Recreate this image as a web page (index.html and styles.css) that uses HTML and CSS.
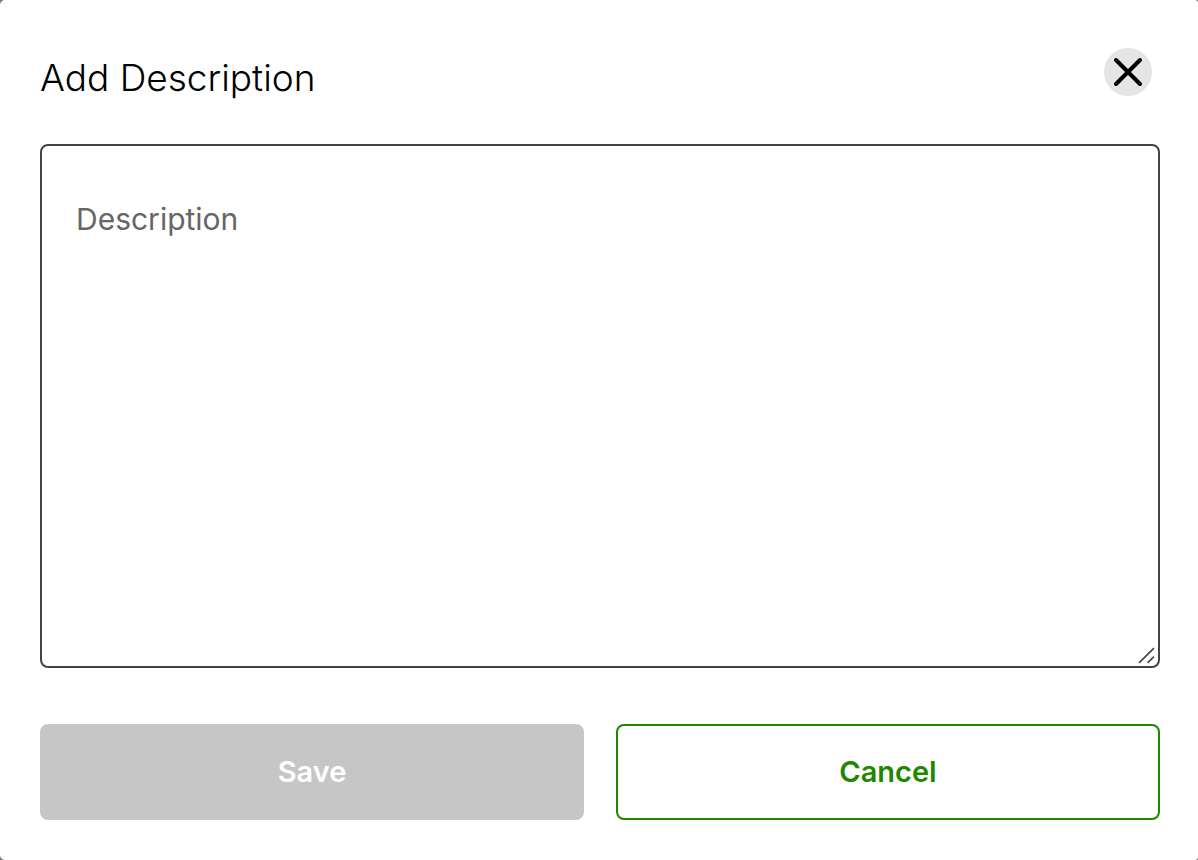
FILE: index.html
```html
<!DOCTYPE html>
<html lang="en">
<head>
<meta charset="utf-8">
<meta name="viewport" content="width=device-width, initial-scale=1">
<title>Add Description</title>
<link rel="stylesheet" href="styles.css">
</head>
<body>
<main class="dialog" role="dialog" aria-labelledby="dialog-title">
  <header class="dialog-header">
    <h1 class="dialog-title" id="dialog-title">Add Description</h1>
    <button class="close" type="button" aria-label="Close">
      <svg viewBox="0 0 48 48" aria-hidden="true"><path d="M12 12L36 36M36 12L12 36"/></svg>
    </button>
  </header>
  <form class="dialog-form">
    <div class="field">
      <textarea class="description" aria-label="Description" placeholder="Description"></textarea>
      <svg class="grip" viewBox="0 0 16 16" aria-hidden="true"><path d="M1 15L15 1M9 15L15 9"/></svg>
    </div>
    <div class="actions">
      <button class="button save" type="submit" disabled>Save</button>
      <button class="button cancel" type="button">Cancel</button>
    </div>
  </form>
</main>
</body>
</html>
```
FILE: styles.css
```css
* {
  box-sizing: border-box;
}

body {
  margin: 0;
  background: #757575;
  font-family: "Inter", "Liberation Sans", sans-serif;
}

.dialog {
  display: flex;
  flex-direction: column;
  min-height: 100vh;
  padding: 48px 38px 40px 40px;
  border-radius: 5px 3px 3px 5px;
  background: #fff;
}

.dialog-header {
  display: flex;
  justify-content: space-between;
  align-items: flex-start;
  padding-right: 8px;
  margin-bottom: 36px;
}

.dialog-title {
  margin: 0;
  color: #000;
  font-size: 37px;
  font-weight: 300;
  line-height: 60px;
}

.close {
  width: 48px;
  height: 48px;
  padding: 0;
  border: 0;
  border-radius: 50%;
  background: #e5e5e5;
}

.close svg {
  display: block;
  width: 100%;
  fill: none;
  stroke: #000;
  stroke-width: 4;
  stroke-linecap: round;
}

.dialog-form {
  display: flex;
  flex: 1;
  flex-direction: column;
  gap: 56px;
}

.field {
  position: relative;
  display: flex;
  flex: 1;
}

.description {
  flex: 1;
  min-width: 0;
  padding: 53px 34px;
  border: 2px solid #444;
  border-radius: 8px;
  outline: 0;
  background: #fff;
  color: #000;
  font: 400 30px/40px "Inter", "Liberation Sans", sans-serif;
  resize: none;
}

.description::placeholder {
  color: #666;
  opacity: 1;
}

.grip {
  position: absolute;
  right: 5px;
  bottom: 4px;
  width: 17px;
  height: 17px;
  fill: none;
  stroke: #444;
  stroke-width: 1.5;
}

.actions {
  display: grid;
  grid-template-columns: 1fr 1fr;
  gap: 32px;
}

.button {
  height: 96px;
  border: 2px solid #1f8700;
  border-radius: 8px;
  background: #fff;
  color: #1f8700;
  font: 600 29px/40px "Inter", "Liberation Sans", sans-serif;
}

.save {
  border-color: #c6c6c6;
  background: #c6c6c6;
  color: #fff;
}
```
